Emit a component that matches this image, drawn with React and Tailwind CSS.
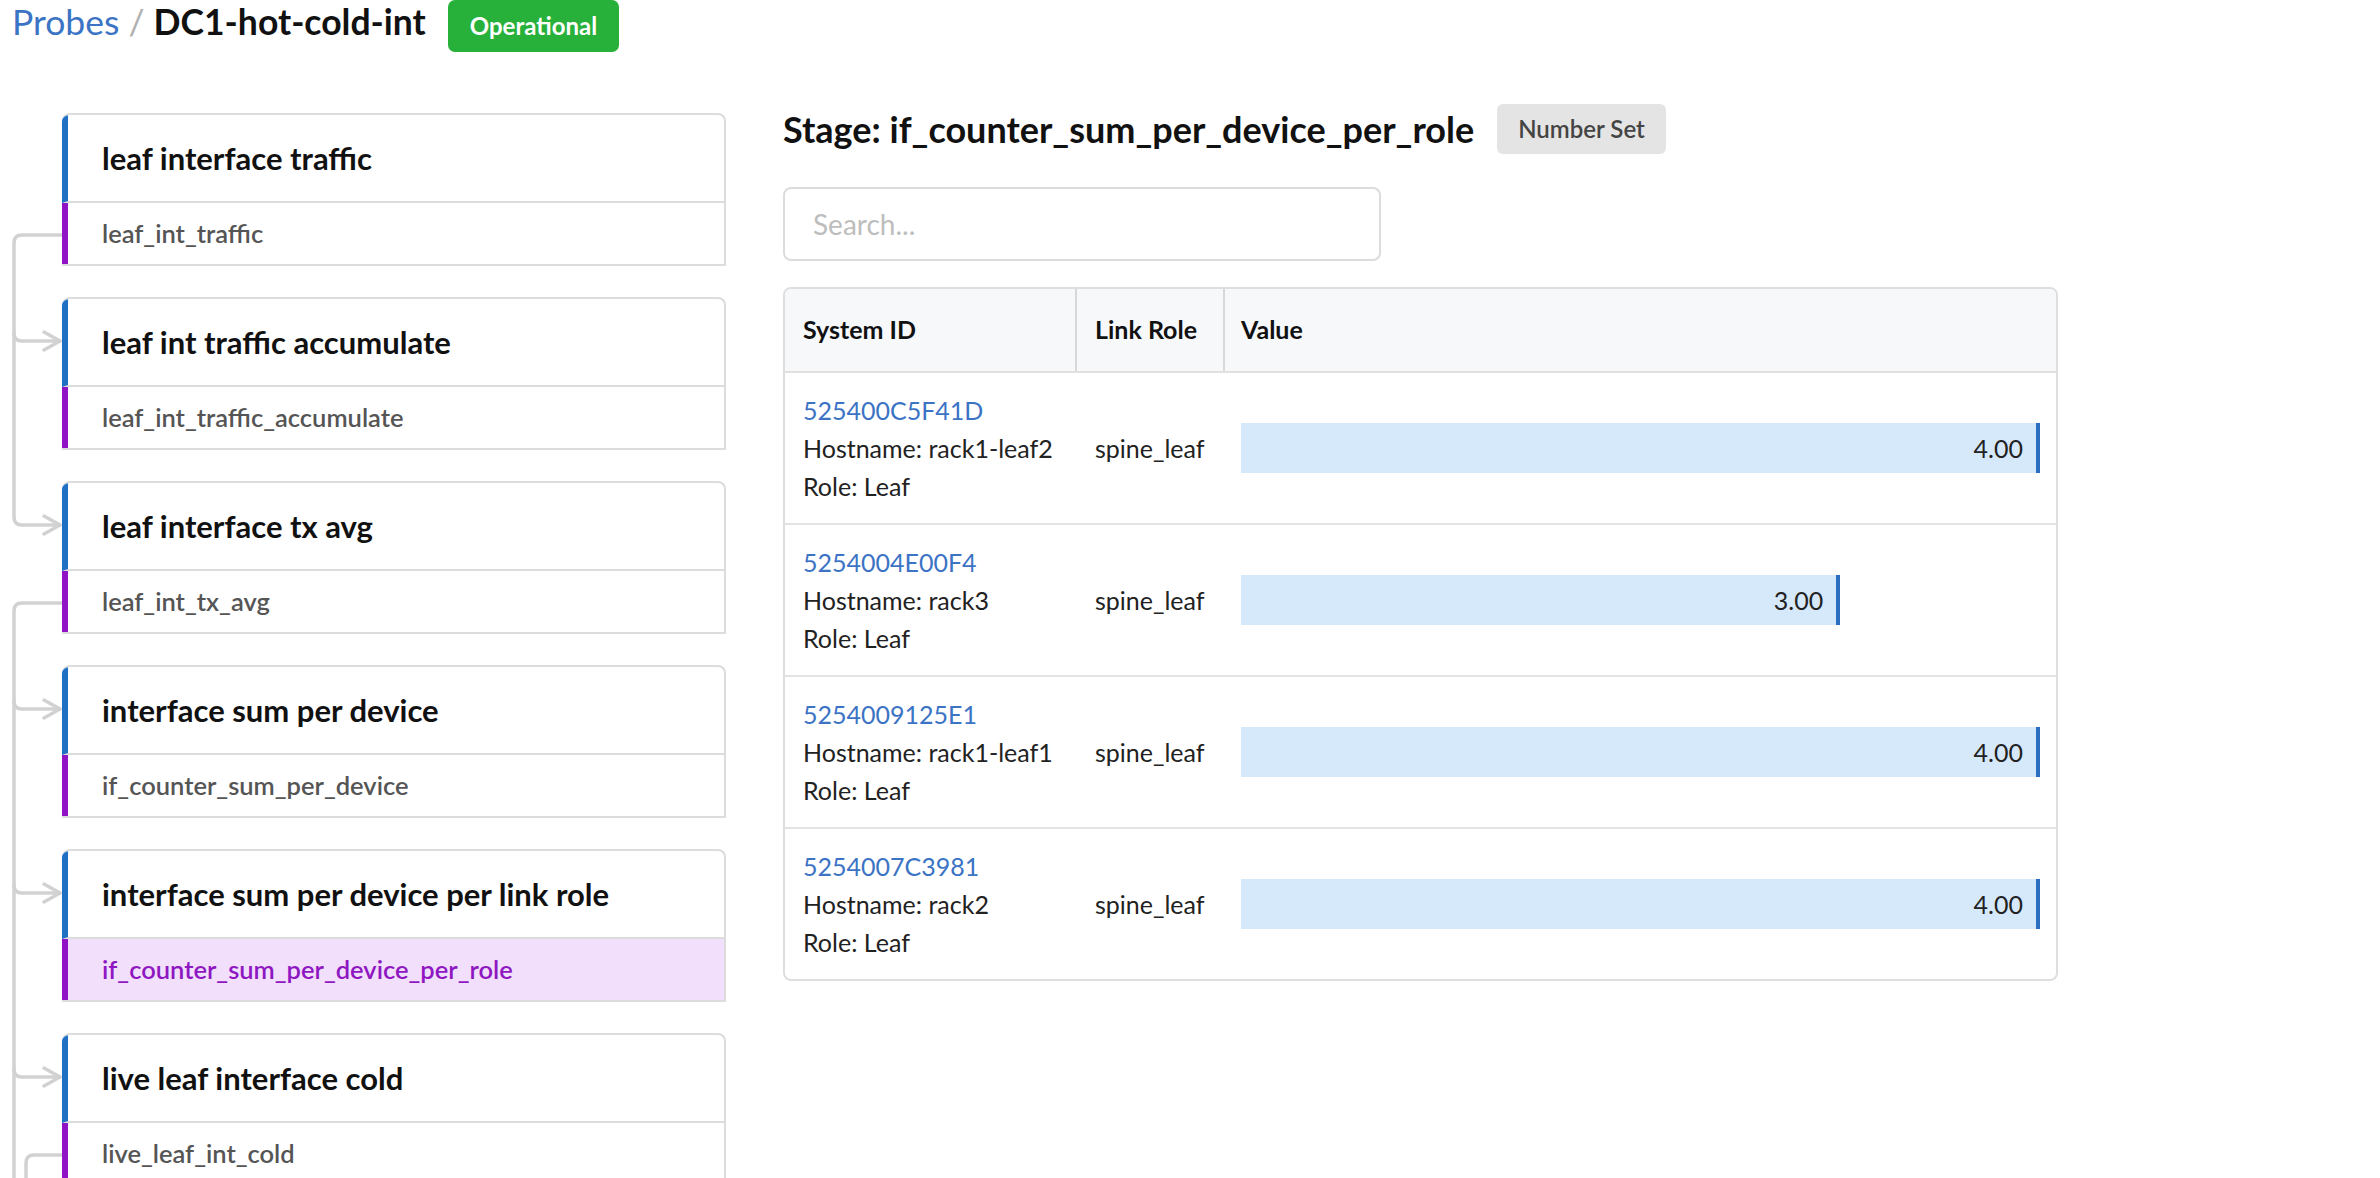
import React from 'react';

const cards = [
  { title: 'leaf interface traffic', sub: 'leaf_int_traffic' },
  { title: 'leaf int traffic accumulate', sub: 'leaf_int_traffic_accumulate' },
  { title: 'leaf interface tx avg', sub: 'leaf_int_tx_avg' },
  { title: 'interface sum per device', sub: 'if_counter_sum_per_device' },
  { title: 'interface sum per device per link role', sub: 'if_counter_sum_per_device_per_role', active: true },
  { title: 'live leaf interface cold', sub: 'live_leaf_int_cold' },
];

const rows = [
  { id: '525400C5F41D', host: 'rack1-leaf2', value: 4 },
  { id: '5254004E00F4', host: 'rack3', value: 3 },
  { id: '5254009125E1', host: 'rack1-leaf1', value: 4 },
  { id: '5254007C3981', host: 'rack2', value: 4 },
];

function Arrow({ y }) {
  return <path d={`M44 ${y - 9} L60 ${y} L44 ${y + 9}`} />;
}

function Branch({ x, y }) {
  return <path d={`M${x} ${y - 8} Q${x} ${y} ${x + 8} ${y} H60`} />;
}

function Connectors() {
  return (
    <svg
      className="absolute left-0 top-0 pointer-events-none"
      width="62"
      height="1100"
      viewBox="0 0 62 1100"
      fill="none"
      stroke="#d2d2d2"
      strokeWidth="3.5"
      strokeLinejoin="round"
      strokeLinecap="round"
    >
      <path d="M62 127 H22 Q14 127 14 135 V409 Q14 417 22 417 H60" />
      <Branch x={14} y={233} />
      <Arrow y={233} />
      <Arrow y={417} />
      <path d="M62 495 H22 Q14 495 14 503 V1100" />
      <Branch x={14} y={601} />
      <Branch x={14} y={785} />
      <Branch x={14} y={969} />
      <Arrow y={601} />
      <Arrow y={785} />
      <Arrow y={969} />
      <path d="M62 1047 H34 Q26 1047 26 1055 V1100" />
    </svg>
  );
}

function Card({ title, sub, active }) {
  return (
    <div className="w-[664px] border-2 border-l-0 border-[#dcdcdc] rounded-t-[8px] overflow-hidden bg-white">
      <div className="h-[88px] border-b-2 border-b-[#dcdcdc] border-l-[6px] border-l-[#1f6fc5] flex items-center pl-[34px] text-[31px] leading-[38px] font-bold text-[#111]">
        {title}
      </div>
      <div
        className={
          active
            ? 'h-[61px] border-l-[6px] border-l-[#9013c6] bg-[#f2dffb] flex items-center pl-[34px] text-[25.5px] leading-[31px] font-semibold text-[#8e17c2]'
            : 'h-[61px] border-l-[6px] border-l-[#9013c6] flex items-center pl-[34px] text-[25.5px] leading-[31px] font-semibold text-[#555]'
        }
      >
        {sub}
      </div>
    </div>
  );
}

export default function App() {
  return (
    <div className="w-screen h-screen overflow-hidden bg-white font-['Lato',sans-serif] text-[#222]">
      <div className="flex items-start pl-[12px]">
        <h1 className="text-[35.5px] leading-[43px] whitespace-nowrap">
          <span className="text-[#3b74c4]">Probes</span>
          <span className="text-[#b0b0b0]"> / </span>
          <span className="font-bold text-[#111]">DC1-hot-cold-int</span>
        </h1>
        <div className="ml-[22px] h-[52px] px-[22px] rounded-[7px] bg-[#27b13b] text-white text-[24px] font-bold flex items-center">
          Operational
        </div>
      </div>

      <div className="flex mt-[56px]">
        <div className="relative w-[726px] shrink-0 pl-[62px] pt-[5px] flex flex-col gap-[31px]">
          <Connectors />
          {cards.map((c) => (
            <Card key={c.sub} {...c} />
          ))}
        </div>

        <div className="ml-[57px] w-[1275px] shrink-0">
          <div className="flex items-center h-[42px] gap-[23px]">
            <h2 className="text-[36px] leading-[42px] font-bold text-[#111] whitespace-nowrap">
              Stage: if_counter_sum_per_device_per_role
            </h2>
            <div className="h-[50px] px-[21px] rounded-[6px] bg-[#e4e4e4] text-[24px] font-semibold text-[#444] flex items-center whitespace-nowrap">
              Number Set
            </div>
          </div>

          <input
            className="mt-[37px] block h-[74px] w-[598px] border-2 border-[#dcdcdc] rounded-[8px] px-[28px] text-[28px] outline-none placeholder:text-[#bdbdbd]"
            placeholder="Search..."
          />

          <div className="mt-[26px] w-[1275px] border-2 border-[#dedede] rounded-[8px] overflow-hidden">
            <div className="grid grid-cols-[290px_148px_1fr] h-[84px] bg-[#f7f8fa] border-b-2 border-[#e0e0e0] text-[25px] font-bold text-[#111]">
              <div className="flex items-center pl-[18px]">System ID</div>
              <div className="flex items-center pl-[18px] border-l-2 border-[#d8d8d8]">Link Role</div>
              <div className="flex items-center pl-[16px] border-l-2 border-[#d8d8d8]">Value</div>
            </div>
            {rows.map((r, i) => (
              <div
                key={r.id}
                className={
                  i < rows.length - 1
                    ? 'grid grid-cols-[290px_148px_1fr] border-b-2 border-[#e3e3e3] text-[25px] leading-[38px]'
                    : 'grid grid-cols-[290px_148px_1fr] text-[25px] leading-[38px]'
                }
              >
                <div className="py-[18px] pl-[18px]">
                  <div className="text-[#3b73c5]">{r.id}</div>
                  <div>Hostname: {r.host}</div>
                  <div>Role: Leaf</div>
                </div>
                <div className="flex items-center pl-[18px] border-l-2 border-transparent">spine_leaf</div>
                <div className="flex items-center pl-[16px] pr-[16px] border-l-2 border-transparent">
                  <div
                    className="h-[50px] bg-[#d6e9fb] border-r-4 border-[#2c6fc0] flex items-center justify-end pr-[13px]"
                    style={{ width: `${(r.value / 4) * 100}%` }}
                  >
                    {r.value.toFixed(2)}
                  </div>
                </div>
              </div>
            ))}
          </div>
        </div>
      </div>
    </div>
  );
}
